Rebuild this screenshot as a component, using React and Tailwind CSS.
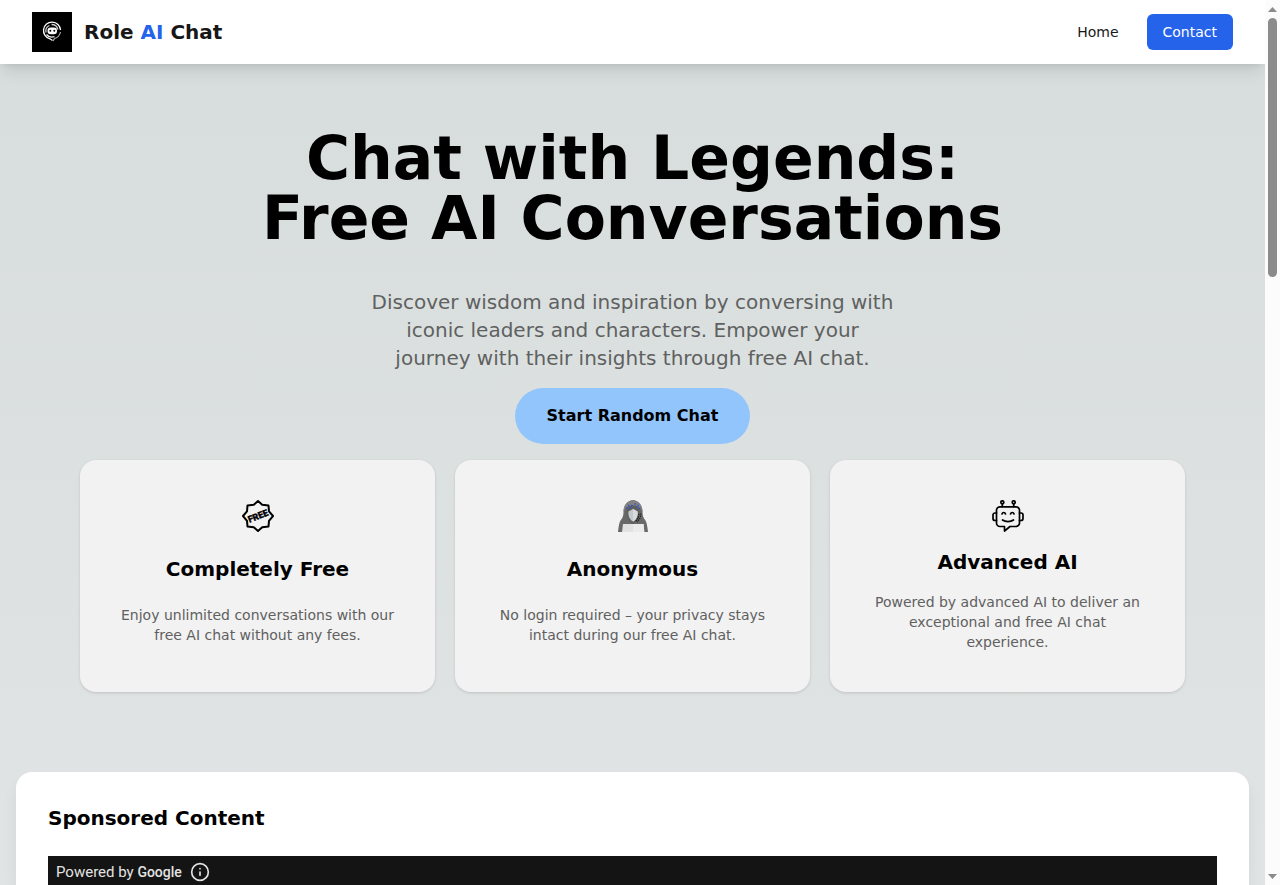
import { Info } from "lucide-react";

const features = [
  {
    title: "Completely Free",
    text: "Enjoy unlimited conversations with our free AI chat without any fees.",
    Icon: FreeIcon,
  },
  {
    title: "Anonymous",
    text: "No login required – your privacy stays intact during our free AI chat.",
    Icon: AnonymousIcon,
  },
  {
    title: "Advanced AI",
    text: "Powered by advanced AI to deliver an exceptional and free AI chat experience.",
    Icon: RobotIcon,
  },
];

export default function App() {
  return (
    <div className="flex h-screen overflow-hidden bg-white font-['DejaVu_Sans',sans-serif] text-black">
      <div className="flex min-w-0 flex-1 flex-col overflow-hidden bg-linear-to-b from-[#d7dddc] to-[#e0e4e4]">
        <Header />
        <main className="shrink-0">
          <Hero />
          <SponsoredContent />
        </main>
      </div>
      <ScrollRail />
    </div>
  );
}

function Header() {
  return (
    <header className="relative z-10 flex h-16 shrink-0 items-center justify-between bg-white px-8 shadow-[0_10px_15px_-3px_rgba(0,0,0,0.1),0_4px_6px_-4px_rgba(0,0,0,0.1)]">
      <a className="flex items-center gap-3 text-xl font-bold text-[#171717]" href="#home">
        <LogoIcon />
        <span>
          Role <span className="text-[#2563eb]">AI</span> Chat
        </span>
      </a>
      <nav className="flex items-center gap-7 text-sm">
        <a className="text-[#171717]" href="#home">
          Home
        </a>
        <a className="flex h-9 items-center rounded-md bg-[#2563eb] px-4 text-white" href="#contact">
          Contact
        </a>
      </nav>
    </header>
  );
}

function Hero() {
  return (
    <section className="flex flex-col items-center px-20 pt-16 pb-20 text-center">
      <h1 className="text-6xl leading-none font-bold">
        Chat with Legends:
        <br />
        Free AI Conversations
      </h1>
      <p className="mt-10 max-w-[530px] text-xl leading-7 text-[#5f6161]">
        Discover wisdom and inspiration by conversing with iconic leaders and characters. Empower your
        journey with their insights through free AI chat.
      </p>
      <button className="mt-4 h-14 rounded-full bg-[#93c5fd] px-8 text-base font-bold" type="button">
        Start Random Chat
      </button>
      <div className="mt-4 grid w-full grid-cols-3 gap-5">
        {features.map(({ title, text, Icon }) => (
          <article
            className="grid justify-items-center gap-4 rounded-2xl bg-[#f2f2f2] p-10 shadow-[0_1px_3px_rgba(0,0,0,0.14)]"
            key={title}
          >
            <Icon />
            <h2 className="text-xl leading-7 font-bold">{title}</h2>
            <p className="text-sm leading-5 text-[#606060]">{text}</p>
          </article>
        ))}
      </div>
    </section>
  );
}

function SponsoredContent() {
  return (
    <section className="mx-4 rounded-2xl bg-white p-8 shadow-[0_10px_15px_rgba(0,0,0,0.06)]">
      <h2 className="text-xl leading-7 font-bold">Sponsored Content</h2>
      <div className="mt-6 h-64 bg-[#141414]">
        <div className="flex h-8 items-center gap-2 px-2 font-['Roboto',sans-serif] text-[#e3e3e3]">
          <span className="text-[15px]">
            Powered by <span className="text-sm font-medium">Google</span>
          </span>
          <Info size={20} strokeWidth={2} />
        </div>
      </div>
    </section>
  );
}

function ScrollRail() {
  return (
    <div aria-hidden="true" className="flex w-[15px] shrink-0 flex-col items-center bg-[#fcfcfc]">
      <div className="flex h-[18px] items-center">
        <svg width="9" height="5" viewBox="0 0 9 5" fill="#8b8b8b">
          <path d="M0 5 4.5 0 9 5z" />
        </svg>
      </div>
      <div className="h-[259px] w-[9px] rounded-full bg-[#8b8b8b]" />
      <div className="mt-auto flex h-[18px] items-center">
        <svg width="9" height="5" viewBox="0 0 9 5" fill="#8b8b8b">
          <path d="M0 0h9L4.5 5z" />
        </svg>
      </div>
    </div>
  );
}

function LogoIcon() {
  return (
    <svg aria-hidden="true" width="40" height="40" viewBox="0 0 40 40" fill="none">
      <path d="M0 0h40v40H0z" fill="#000" />
      <path d="M20.5 28.5 18 26.800A8.500 8.500 0 1 1 28.500 18" stroke="#fff" strokeWidth="1.3" />
      <path d="M28.500 20a8.500 8.500 0 0 1-6 6.500l-1.500 2.500" stroke="#b5b5b5" strokeWidth="1.1" />
      <path d="M14 20.500a6.200 6.200 0 0 1 3.500-7M19.500 12.500a6.300 6.300 0 0 1 6.300 5" stroke="#ccc" strokeWidth="1.3" />
      <path d="M14.500 22.500q2.500 3.500 8 2.200" stroke="#eee" strokeWidth="1.3" />
      <rect x="15.5" y="15.5" width="9.5" height="6.7" rx="3.2" fill="#fff" />
      <circle cx="18.3" cy="18.8" r="1" fill="#000" />
      <circle cx="22.3" cy="18.8" r="1" fill="#000" />
    </svg>
  );
}

function FreeIcon() {
  return (
    <svg aria-hidden="true" width="32" height="32" viewBox="0 0 32 32" fill="none">
      <path
        d="m16 1 4.200 3.700 6.300.8.5 5.800L31 16l-4 4.800-.5 5.700-6.300.8L16 31l-4.200-3.700-6.300-.8-.5-5.700L1 16l4-4.700.5-5.800 6.300-.8z"
        stroke="#000"
        strokeWidth="2"
        strokeLinejoin="round"
      />
      <text
        x="16"
        y="19.2"
        textAnchor="middle"
        transform="rotate(-22 16 16)"
        fill="#000"
        stroke="#000"
        strokeWidth=".5"
        fontFamily="Roboto, sans-serif"
        fontSize="9"
        fontWeight="700"
      >
        FREE
      </text>
    </svg>
  );
}

function AnonymousIcon() {
  return (
    <svg aria-hidden="true" width="32" height="32" viewBox="0 0 32 32">
      <path
        d="M16 0c-5.500.8-9.500 5-9.500 12 0 4-1 6-3 8.500-1.200 2-2 6-2.500 11.500h30c-.5-5.500-1.300-9.500-2.500-11.500-2-2.500-3-4.500-3-8.500C25.500 5 21.500.8 16 0"
        fill="#696969"
      />
      <path d="M16 0c-5.500.8-9.500 5-9.500 12 2.500-5 5-6.500 9.500-6.500s7 1.500 9.500 6.500C25.500 5 21.500.8 16 0" fill="#828282" />
      <path d="M16 5.500c-4.500 0-6.500 3-6.500 7.500 0 5 3 9 6.500 11 3.500-2 6.500-6 6.500-11 0-4.500-2-7.500-6.500-7.500" fill="#606060" />
      <path d="M11.500 11.500 16 9l4.500 2.500c.6 4-1 8-4.500 10-3.500-2-5.100-6-4.500-10" fill="#c3cacc" />
      <path d="m16 9 4.500 2.500c.6 4-1 8-4.500 10z" fill="#dadada" />
      <path d="M6 24h20.500l.8 8H5z" fill="#e2e2e2" />
      <path d="M16 24h10.500l.8 8H16z" fill="#ebebeb" />
      <path
        d="M11 5.500h1.300M14 5.500h1.300M17.500 4h1.300M20.500 5.500h1.300M9 8h1.300M12.500 8h1.300M19 7h1.300M22 8.500h1.300"
        stroke="#2450d8"
        strokeWidth="1.4"
      />
      <path d="M24 13.500l-1 4.500-3 4M22 14l-1 4-2 3" fill="none" stroke="#171717" strokeWidth="1.2" strokeDasharray="1.2 1" />
    </svg>
  );
}

function RobotIcon() {
  return (
    <svg
      aria-hidden="true"
      width="32"
      height="32"
      viewBox="0 0 32 32"
      fill="none"
      stroke="#000"
      strokeWidth="1.7"
      strokeLinecap="round"
      strokeLinejoin="round"
    >
      <path d="M8 6.800h16a3.500 3.500 0 0 1 3.500 3.500V23a3.500 3.500 0 0 1-3.500 3.500h-6L12.500 31v-4.500H8A3.500 3.500 0 0 1 4.500 23V10.300A3.500 3.500 0 0 1 8 6.800z" />
      <path d="M4.500 13H3a2 2 0 0 0-2 2v3.500a2 2 0 0 0 2 2h1.500M27.500 13H29a2 2 0 0 1 2 2v3.500a2 2 0 0 1-2 2h-1.500" />
      <path d="M10.300 6.500V4M21.700 6.500V4" />
      <circle cx="10.3" cy="2.3" r="1.5" />
      <circle cx="21.7" cy="2.3" r="1.5" />
      <path d="M10 14c.5-2 3-2 3.500 0M18.500 14c.5-2 3-2 3.500 0M10.500 20c3 2.200 8 2.200 11 0" />
    </svg>
  );
}
